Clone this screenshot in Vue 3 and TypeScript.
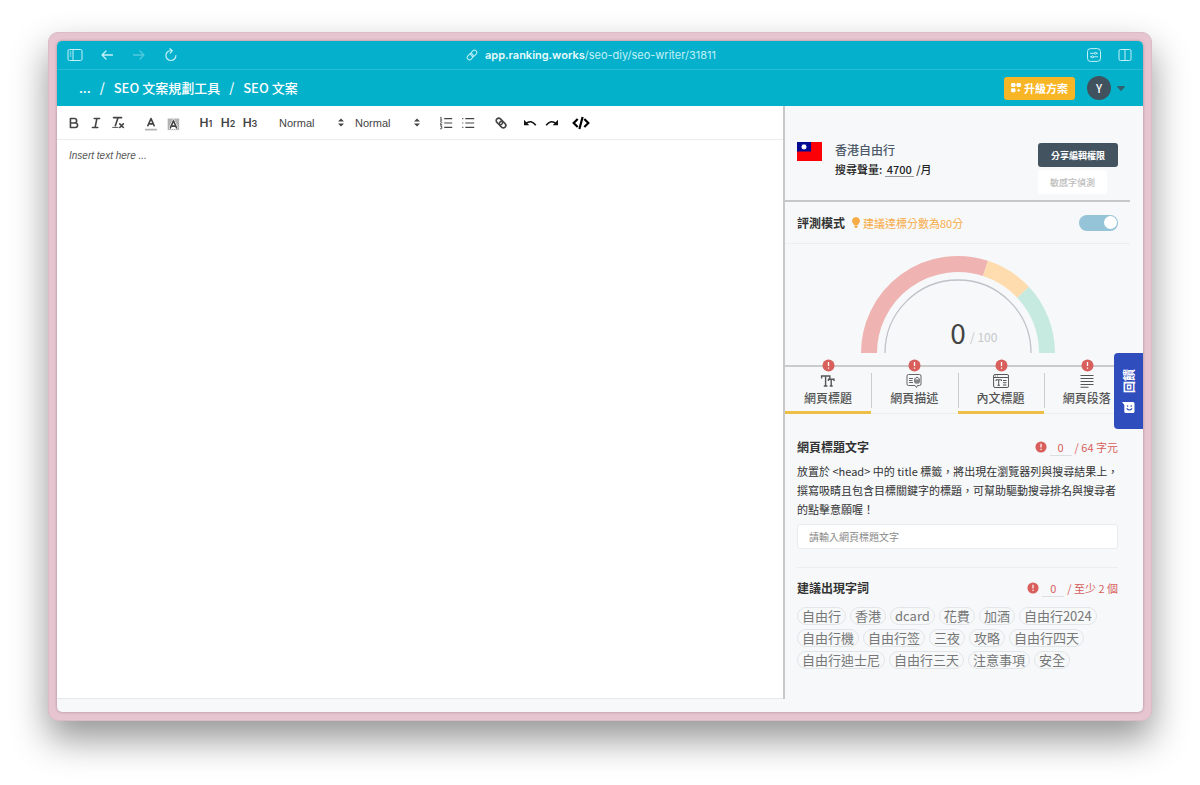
<script setup lang="ts">
import { ref } from 'vue'

interface Tab {
  id: string
  label: string
  complete: boolean
}

const tabs: Tab[] = [
  { id: 'title', label: '網頁標題', complete: true },
  { id: 'description', label: '網頁描述', complete: false },
  { id: 'heading', label: '內文標題', complete: true },
  { id: 'paragraph', label: '網頁段落', complete: false },
]

const keywords: string[] = [
  '自由行', '香港', 'dcard', '花費', '加酒', '自由行2024',
  '自由行機', '自由行签', '三夜', '攻略', '自由行四天',
  '自由行迪士尼', '自由行三天', '注意事項', '安全',
]

const headings = [1, 2, 3]
const evaluating = ref(true)
const pageTitle = ref('')
const content = ref('')
const fontSize = ref('normal')
const fontStyle = ref('normal')
</script>

<template>
  <div class="desktop">
    <div class="frame">
      <div class="window">
        <div class="browser-bar">
          <div class="browser-group">
            <button class="bar-btn" aria-label="Sidebar">
              <svg width="16" height="14" viewBox="0 0 16 14" fill="none" stroke="currentColor">
                <rect x="1" y="1.500" width="14" height="11" rx="1.500" />
                <path d="M6 1.500v11M2.800 4h1.500M2.800 6h1.500M2.800 8h1.500" />
              </svg>
            </button>
            <button class="bar-btn" aria-label="Back">
              <svg width="16" height="14" viewBox="0 0 16 14" fill="none" stroke="currentColor" stroke-width="1.300" stroke-linecap="round" stroke-linejoin="round">
                <path d="M13.500 7H3M7 3L3 7l4 4" />
              </svg>
            </button>
            <button class="bar-btn faded" aria-label="Forward">
              <svg width="16" height="14" viewBox="0 0 16 14" fill="none" stroke="currentColor" stroke-width="1.300" stroke-linecap="round" stroke-linejoin="round">
                <path d="M2.500 7H13M9 3l4 4-4 4" />
              </svg>
            </button>
            <button class="bar-btn" aria-label="Reload">
              <svg width="16" height="14" viewBox="0 0 16 14" fill="none" stroke="currentColor" stroke-width="1.200" stroke-linecap="round" stroke-linejoin="round">
                <path d="M12.900 7.500a5 5 0 1 1-5-5h1.300M7 .7l2.300 1.900L7.300 5" />
              </svg>
            </button>
          </div>
          <div class="address">
            <svg width="12" height="12" viewBox="0 0 12 12" fill="none" stroke="currentColor">
              <g transform="rotate(-45 6 6)">
                <rect x=".2" y="3.700" width="6.600" height="4.600" rx="2.300" />
                <rect x="5.200" y="3.700" width="6.600" height="4.600" rx="2.300" />
              </g>
            </svg>
            <span class="url"><b>app.ranking.works</b>/seo-diy/seo-writer/31811</span>
          </div>
          <div class="browser-group right">
            <button class="bar-btn" aria-label="Page settings">
              <svg width="16" height="14" viewBox="0 0 16 14" fill="none" stroke="currentColor">
                <rect x="1.500" y=".6" width="13" height="12.800" rx="3" />
                <path d="M4.500 5.300h4M10.500 5.300h1M4.500 8.800h1M7.500 8.800h4" stroke-linecap="round" />
                <circle cx="9.500" cy="5.300" r="1" />
                <circle cx="6.500" cy="8.800" r="1" />
              </svg>
            </button>
            <button class="bar-btn" aria-label="Split view">
              <svg width="16" height="14" viewBox="0 0 16 14" fill="none" stroke="currentColor">
                <rect x="2" y="1.500" width="12" height="11" rx="1.500" />
                <path d="M8 1.500v11" />
              </svg>
            </button>
          </div>
        </div>

        <header class="app-header">
          <nav class="crumbs" aria-label="Breadcrumb">
            <a href="#">...</a>
            <span>/</span>
            <a href="#">SEO 文案規劃工具</a>
            <span>/</span>
            <a href="#">SEO 文案</a>
          </nav>
          <div class="account">
            <button class="upgrade">
              <svg width="11" height="10" viewBox="0 0 11 10" fill="currentColor">
                <rect x="0" y="0" width="4.500" height="4" rx="1.200" />
                <rect x="5.500" y="0" width="4.500" height="4" rx="1.200" />
                <rect x="0" y="5.200" width="4.500" height="4" rx="1.200" />
                <path d="M7.700 5.300l.6 1.400 1.400.6-1.400.6-.6 1.400-.6-1.400-1.400-.6 1.400-.6z" />
              </svg>
              升級方案
            </button>
            <button class="profile" aria-label="Account menu">
              <span class="avatar">Y</span>
              <svg width="8" height="5" viewBox="0 0 8 5"><path d="M.5 0h7q.6.3.2.9L4.700 4.600q-.7.7-1.400 0L.3.9Q-.1.300.5 0z" fill="#33606f" /></svg>
            </button>
          </div>
        </header>

        <main class="workspace">
          <section class="editor">
            <div class="toolbar" role="toolbar" aria-label="Formatting">
              <div class="tools">
                <button aria-label="Bold">
                  <svg class="q" viewBox="0 0 18 18"><path d="M5 4h4.500a2.500 2.500 0 0 1 0 5H5zM5 9h5.500a2.500 2.500 0 0 1 0 5H5z" /></svg>
                </button>
                <button aria-label="Italic">
                  <svg class="q" viewBox="0 0 18 18"><path d="M7 4h6M5 14h6M8 14l2-10" /></svg>
                </button>
                <button aria-label="Clear formatting">
                  <svg class="q" viewBox="0 0 18 18"><path d="M4 3h9M6 12l3-9M11 10l4 4M15 10l-4 4" /><path class="thin" d="M3 14h6" /></svg>
                </button>
              </div>
              <div class="tools">
                <button aria-label="Text color">
                  <svg class="q" viewBox="0 0 18 18"><path d="M5.500 12L9 4l3.500 8M6.400 10h5.200" /><path d="M3 16.500h12" opacity=".4" /></svg>
                </button>
                <button aria-label="Background color">
                  <svg class="q" viewBox="0 0 18 18">
                    <defs>
                      <pattern id="dots" width="2" height="2" patternUnits="userSpaceOnUse"><path d="M0 0h1v1H0zM1 1h1v1H1z" fill="#666" stroke="none" /></pattern>
                    </defs>
                    <rect x="3" y="4" width="13" height="13" fill="url(#dots)" stroke="none" />
                    <path d="M6 14.500L9.500 6.500l3.500 8z" fill="#fff" stroke="#fff" stroke-width="3" />
                    <path d="M6 14.500L9.500 6.500l3.500 8M6.900 12.500h5.200" />
                  </svg>
                </button>
              </div>
              <div class="tools">
                <button v-for="n in headings" :key="n" class="heading-btn" :aria-label="`Heading ${n}`">H<small>{{ n }}</small></button>
              </div>
              <div class="tools">
                <label class="picker">
                  <select v-model="fontSize" aria-label="Size"><option value="normal">Normal</option></select>
                  <svg width="6" height="9" viewBox="0 0 6 9" fill="#444"><path d="M0 3.500L3 .5l3 3zM0 5.500l3 3 3-3z" /></svg>
                </label>
                <label class="picker">
                  <select v-model="fontStyle" aria-label="Paragraph style"><option value="normal">Normal</option></select>
                  <svg width="6" height="9" viewBox="0 0 6 9" fill="#444"><path d="M0 3.500L3 .5l3 3zM0 5.500l3 3 3-3z" /></svg>
                </label>
              </div>
              <div class="tools">
                <button aria-label="Numbered list">
                  <svg class="q list" viewBox="0 0 18 18"><path d="M7 4h9M7 9h9M7 14h9" /><path class="thin" d="M2.500 3.200l1-.7v3.300M2.300 5.800h2.400M2.300 7.800q2-.8 2 .5 0 .5-2 2.200h2.400M2.300 12.300h2.200l-1 1.300q1.200 0 1.200 1t-2.400 1" /></svg>
                </button>
                <button aria-label="Bulleted list">
                  <svg class="q list" viewBox="0 0 18 18"><path d="M6 4h10M6 9h10M6 14h10M2.500 4h1.200M2.500 9h1.200M2.500 14h1.200" /></svg>
                </button>
              </div>
              <div class="tools">
                <button aria-label="Link">
                  <svg class="q" viewBox="0 0 18 18">
                    <g transform="rotate(45 9 9)">
                      <rect x="2.500" y="6.200" width="8" height="5.600" rx="2.800" />
                      <rect x="7.500" y="6.200" width="8" height="5.600" rx="2.800" />
                    </g>
                  </svg>
                </button>
              </div>
              <div class="tools close">
                <button aria-label="Undo">
                  <svg width="14" height="14" viewBox="0 0 14 14"><path d="M3 7.500q5-4.300 9.800 1.800" fill="none" stroke="#111" stroke-width="1.600" /><path d="M1 3.800v5.400h5.300z" fill="#111" /></svg>
                </button>
                <button aria-label="Redo">
                  <svg width="14" height="14" viewBox="0 0 14 14"><path d="M11 7.500Q6 3.200 1.200 9.300" fill="none" stroke="#111" stroke-width="1.600" /><path d="M13 3.800v5.400H7.700z" fill="#111" /></svg>
                </button>
              </div>
              <div class="tools close">
                <button aria-label="Source code">
                  <svg width="18" height="14" viewBox="0 0 18 14" fill="none" stroke="#000" stroke-width="2.200"><path d="M5.700 3L1.700 7l4 4M12.300 3l4 4-4 4M10.600 1L7.400 13" /></svg>
                </button>
              </div>
            </div>
            <textarea v-model="content" class="page" aria-label="Article content" placeholder="Insert text here ..."></textarea>
          </section>

          <aside class="side">
            <div class="side-body">
              <div class="project">
                <svg class="flag" width="25" height="19" viewBox="0 0 25 19">
                  <path d="M0 0h25v19H0z" fill="#fb0007" />
                  <path d="M0 0h14v9.500H0z" fill="#000b92" />
                  <path d="M7 1.700l.8 1.400 1.500-.5-.5 1.500 1.400.8-1.400.8.5 1.500-1.500-.5L7 8.100l-.8-1.400-1.500.5.5-1.500-1.400-.8 1.400-.8-.5-1.500 1.500.5z" fill="#fff" />
                </svg>
                <div class="project-text">
                  <h1>香港自由行</h1>
                  <p>搜尋聲量: <span class="volume">4700</span> /月</p>
                </div>
                <div class="project-actions">
                  <button class="share">分享編輯權限</button>
                  <button class="detect" disabled>敏感字偵測</button>
                </div>
              </div>

              <div class="mode">
                <label for="mode-switch">評測模式</label>
                <span class="hint">
                  <svg width="8" height="11" viewBox="0 0 8 11" fill="currentColor"><path d="M4 0a3.900 3.900 0 0 1 2.500 6.900L6 8H2l-.5-1.100A3.900 3.900 0 0 1 4 0zM2.300 8.600h3.400v1L4.800 11H3.200l-.9-1.400z" /></svg>
                  建議達標分數為80分
                </span>
                <input id="mode-switch" v-model="evaluating" class="switch" type="checkbox" role="switch">
              </div>

              <div class="gauge">
                <svg width="200" height="98" viewBox="0 0 200 98" fill="none" role="img" aria-label="0 / 100">
                  <path d="M11 98A89 89 0 0 1 127.500 13.400" stroke="#efb3b1" stroke-width="16" />
                  <path d="M127.500 13.400A89 89 0 0 1 165.100 37.300" stroke="#fedcae" stroke-width="16" />
                  <path d="M165.100 37.300A89 89 0 0 1 189 98" stroke="#c6eadf" stroke-width="16" />
                  <path d="M27 98a73 73 0 0 1 146 0" stroke="#bfc2c7" stroke-width="1.300" />
                  <text class="score" x="100" y="89" text-anchor="middle">0</text>
                  <text class="total" x="112" y="87">/ 100</text>
                </svg>
              </div>

              <div class="tabs" role="tablist">
                <button v-for="tab in tabs" :key="tab.id" class="tab" :class="{ complete: tab.complete }" role="tab">
                  <svg class="alert badge" width="13" height="13" viewBox="0 0 13 13"><circle cx="6.500" cy="6.500" r="6" fill="#d85f5c" /><path d="M6.500 3v4M6.500 8.500v1.300" stroke="#fff" stroke-width="1.300" /></svg>
                  <svg v-if="tab.id === 'title'" width="16" height="16" viewBox="0 0 16 16" fill="none" stroke="currentColor" stroke-width="1.400">
                    <path d="M1.600 5.500V3h8.200v2.500M5.600 3v10M3.800 13h3.600M8.500 8V6.300H14V8M11.200 6.300V13M9.700 13h3" />
                  </svg>
                  <svg v-else-if="tab.id === 'description'" width="16" height="16" viewBox="0 0 16 16" fill="none" stroke="currentColor">
                    <path d="M2.500 1.500h11q1.500 0 1.500 1.500v8q0 1.500-1.500 1.500h-2l-1 2-1.500-2H2.500Q1 12.500 1 11V3q0-1.500 1.500-1.500zM3 5.500h4M3 7.500h3.500M3 9.500h4M8 6.500l3-2.500 3 2.500M9 6v4h4V6M8 8h6M11 6v4" stroke-width=".9" />
                  </svg>
                  <svg v-else-if="tab.id === 'heading'" width="16" height="16" viewBox="0 0 16 16" fill="none" stroke="currentColor">
                    <rect x=".6" y="1.500" width="15" height="13" rx="1.500" />
                    <path d="M.6 4.500h15M3 8V6.800h5.500V8M5.700 6.800v5.500M4.500 12.300h2.500M10 7.500h3.500M10 9.700h3.500M10 12h3.500M2.300 3h.8M4.300 3h.8" />
                  </svg>
                  <svg v-else width="16" height="16" viewBox="0 0 16 16" fill="none" stroke="currentColor" stroke-width="1.100">
                    <path d="M1.500 2.500h13M1.500 5.500h13M1.500 8.500h13M1.500 11.500h13M1.500 14.300h8" />
                  </svg>
                  <span>{{ tab.label }}</span>
                </button>
              </div>

              <section class="block">
                <div class="block-head">
                  <h2><label for="page-title">網頁標題文字</label></h2>
                  <p class="count">
                    <svg class="alert" width="12" height="12" viewBox="0 0 13 13"><circle cx="6.500" cy="6.500" r="6" fill="#d85f5c" /><path d="M6.500 3v4M6.500 8.500v1.300" stroke="#fff" stroke-width="1.300" /></svg>
                    <span class="number">0</span>
                    <span>/ 64 字元</span>
                  </p>
                </div>
                <p class="help">放置於 &lt;head&gt; 中的 title 標籤，將出現在瀏覽器列與搜尋結果上，撰寫吸睛且包含目標關鍵字的標題，可幫助驅動搜尋排名與搜尋者的點擊意願喔！</p>
                <input id="page-title" v-model="pageTitle" class="title-input" type="text" placeholder="請輸入網頁標題文字">
              </section>

              <section class="block words">
                <div class="block-head">
                  <h2>建議出現字詞</h2>
                  <p class="count">
                    <svg class="alert" width="12" height="12" viewBox="0 0 13 13"><circle cx="6.500" cy="6.500" r="6" fill="#d85f5c" /><path d="M6.500 3v4M6.500 8.500v1.300" stroke="#fff" stroke-width="1.300" /></svg>
                    <span class="number">0</span>
                    <span>/ 至少 2 個</span>
                  </p>
                </div>
                <ul class="tags">
                  <li v-for="word in keywords" :key="word">{{ word }}</li>
                </ul>
              </section>
            </div>
          </aside>
        </main>

        <button class="feedback">
          <svg width="13" height="13" viewBox="0 0 13 13"><path d="M0 1h11q1.500 0 1.500 1.500v8q0 1.500-1.500 1.500H3.800q-1.500 0-1.500-1.500V4z" fill="#fff" /><path d="M4.700 7.300q2.700 3.400 5.400 0" fill="none" stroke="#2f4dbd" stroke-width="1.100" /><circle cx="5.600" cy="5" r=".8" fill="#2f4dbd" /><circle cx="9.200" cy="5" r=".8" fill="#2f4dbd" /></svg>
          <span>回饋</span>
        </button>
      </div>
    </div>
  </div>
</template>

<style>
body {
  margin: 0;
  background: #fff;
}
</style>

<style scoped>
* {
  box-sizing: border-box;
}

.desktop {
  display: flex;
  min-height: 100vh;
  padding: 32px 48px 64px;
  font-family: "Noto Sans CJK TC", "Noto Sans", sans-serif;
  font-size: 12px;
  color: #333;
}

button,
input,
select,
textarea {
  margin: 0;
  padding: 0;
  border: 0;
  background: none;
  color: inherit;
  font: inherit;
}

svg {
  display: block;
  flex: none;
}

h1,
h2,
p,
ul {
  margin: 0;
  padding: 0;
}

a {
  color: inherit;
  text-decoration: none;
}

.frame {
  display: flex;
  flex: 1;
  min-width: 0;
  padding: 8px;
  border: 1px solid #d9bcc6;
  border-radius: 10px;
  background: #e6c5d0;
  box-shadow: 0 18px 36px rgba(0, 0, 0, 0.42);
}

.window {
  position: relative;
  display: flex;
  flex: 1;
  flex-direction: column;
  min-width: 0;
  overflow: hidden;
  padding-bottom: 13px;
  border-radius: 5px;
  background: #f6f8fa;
  box-shadow: 0 0 3px rgba(80, 40, 60, 0.4);
}

.browser-bar {
  display: flex;
  align-items: center;
  height: 29px;
  padding: 0 10px;
  border-bottom: 1px solid #26bcd3;
  background: #05b0cc;
  color: #c3f1f8;
}

.browser-group {
  display: flex;
  flex: 1;
  gap: 16px;
}

.browser-group.right {
  justify-content: flex-end;
  gap: 15px;
}

.faded {
  opacity: 0.4;
}

.address {
  display: flex;
  align-items: center;
  gap: 7px;
  margin-right: 18px;
  font: 11px/16px Inter, sans-serif;
}

.address b {
  font-weight: 600;
  color: #e6fbfd;
}

.app-header {
  display: flex;
  align-items: center;
  justify-content: space-between;
  height: 36px;
  padding: 0 18px 0 22px;
  background: #03b1cb;
  color: #fff;
}

.crumbs {
  display: flex;
  gap: 9px;
  padding-bottom: 2px;
  font-size: 13px;
  font-weight: 500;
}

.account,
.profile {
  display: flex;
  align-items: center;
}

.account {
  gap: 12px;
}

.profile {
  gap: 6px;
}

.upgrade {
  display: flex;
  align-items: center;
  justify-content: center;
  gap: 2px;
  height: 23px;
  padding: 0 7px;
  border-radius: 3px;
  background: #f8b526;
  font-size: 11px;
  font-weight: 700;
}

.avatar {
  width: 24px;
  border-radius: 50%;
  background: #41525f;
  color: #fff;
  font-size: 11px;
  font-weight: 500;
  line-height: 24px;
  text-align: center;
}

.workspace {
  display: flex;
  flex: 1;
  min-height: 0;
}

.editor {
  display: flex;
  flex: 1;
  flex-direction: column;
  min-width: 0;
  border-bottom: 1px solid #e6e8e9;
  background: #fff;
}

.toolbar {
  display: flex;
  align-items: center;
  height: 34px;
  padding: 0 6px;
  border-bottom: 1px solid #ececec;
  color: #444;
}

.tools {
  display: flex;
  align-items: center;
  margin-right: 11px;
}

.tools.close {
  margin-left: -4px;
}

.tools button {
  display: flex;
  align-items: center;
  justify-content: center;
  min-width: 22px;
  height: 22px;
}

.q {
  width: 16px;
  height: 16px;
  fill: none;
  stroke: #444;
  stroke-width: 1.8;
  stroke-linecap: round;
  stroke-linejoin: round;
}

.q.list {
  stroke-width: 1.3;
  stroke-linecap: butt;
}

.q .thin {
  stroke-width: 1;
}

.tools .heading-btn {
  align-items: baseline;
  font: 600 12px/22px Inter, sans-serif;
}

.heading-btn small {
  font-size: 9px;
}

.picker {
  display: flex;
  align-items: center;
  width: 76px;
  padding: 0 4px 0 7px;
}

.picker select {
  flex: 1;
  min-width: 0;
  height: 22px;
  appearance: none;
  font: 500 11px/22px "Liberation Sans", Arial, sans-serif;
}

.page {
  flex: 1;
  padding: 8px 12px;
  outline: none;
  resize: none;
  font: 10px/16px "Liberation Sans", Arial, sans-serif;
}

.page::placeholder {
  color: #555;
  font-style: italic;
  opacity: 1;
}

.side {
  flex: 0 0 360px;
  min-width: 0;
  border-left: 2px solid #c8c8c8;
  background: #f6f8fa;
}

.side-body {
  margin-right: 13px;
}

.project {
  display: flex;
  padding: 34px 12px 6px;
  border-bottom: 2px solid #c8c8c8;
}

.flag {
  margin-top: 2px;
}

.project-text {
  flex: 1;
  padding-left: 13px;
}

.project h1 {
  color: #4e5a68;
  font-size: 12px;
  font-weight: 500;
  line-height: 20px;
}

.project p {
  color: #222;
  font-size: 11px;
  font-weight: 500;
  line-height: 19px;
}

.volume {
  display: inline-block;
  padding: 0 2px;
  border-bottom: 1px solid #999;
  line-height: 14px;
}

.project-actions {
  display: flex;
  flex-direction: column;
  align-items: flex-start;
  gap: 3px;
  padding-top: 3px;
}

.project-actions button {
  height: 24px;
  padding: 0 12px;
  border-radius: 3px;
  font-size: 9px;
  font-weight: 500;
}

.project-actions .share {
  padding: 0 13px;
  background: #43535f;
  color: #fff;
  font-weight: 700;
}

.detect {
  background: #fff;
  color: #bcbcbc;
}

.mode {
  display: flex;
  align-items: center;
  height: 42px;
  padding: 0 12px;
  border-bottom: 1px solid #eceef0;
}

.mode label {
  color: #333;
  font-size: 12px;
  font-weight: 700;
}

.hint {
  display: flex;
  flex: 1;
  align-items: center;
  gap: 3px;
  padding-left: 7px;
  color: #f7ac48;
  font-size: 11px;
}

.switch {
  display: flex;
  align-items: center;
  width: 39px;
  height: 16px;
  padding: 0 1px;
  appearance: none;
  border-radius: 8px;
  background: #c9ced2;
}

.switch::before {
  content: "";
  width: 13px;
  height: 13px;
  border-radius: 50%;
  background: #fff;
}

.switch:checked {
  justify-content: flex-end;
  background: #95c3d7;
}

.gauge {
  display: flex;
  justify-content: center;
  padding: 11px 0 12px;
}

.score {
  fill: #444;
  font-size: 28px;
}

.total {
  fill: #c6c8ca;
  font-size: 12px;
}

.tabs {
  display: grid;
  grid-template-columns: repeat(4, 1fr);
  border-top: 2px solid #cbcbcb;
}

.tab {
  position: relative;
  display: flex;
  flex-direction: column;
  align-items: center;
  height: 47px;
  padding-top: 6px;
  border-bottom: 1px solid #eceef0;
  color: #555;
  font-size: 12px;
  font-weight: 500;
  line-height: 18px;
}

.tab.complete {
  border-bottom: 3px solid #edbf48;
}

.tab + .tab::before {
  content: "";
  position: absolute;
  top: 6px;
  left: 0;
  height: 35px;
  border-left: 1px solid #ccc;
}

.badge {
  position: absolute;
  top: -8px;
  left: calc(50% - 6px);
}

.block {
  margin: 0 12px;
  padding: 23px 0 18px;
}

.block.words {
  padding-top: 10px;
  border-top: 1px solid #eceef0;
}

.block-head {
  display: flex;
  align-items: center;
  justify-content: space-between;
}

.block h2 {
  color: #333;
  font-size: 12px;
  font-weight: 700;
  line-height: 20px;
}

.count {
  display: flex;
  align-items: center;
  gap: 3px;
  color: #d85f5c;
  font-size: 11px;
  line-height: 16px;
}

.number {
  width: 22px;
  border-bottom: 1px solid #dcdfe2;
  text-align: center;
}

.help {
  margin: 5px -6px 5px 0;
  color: #333;
  font-size: 11px;
  line-height: 19px;
}

.title-input {
  display: block;
  width: 100%;
  height: 25px;
  padding: 0 11px;
  border: 1px solid #e9ebed;
  border-radius: 3px;
  background: #fff;
  font-size: 10px;
}

.title-input::placeholder {
  color: #888;
  opacity: 1;
}

.tags {
  display: flex;
  flex-wrap: wrap;
  gap: 4px;
  margin-top: 9px;
  list-style: none;
}

.tags li {
  padding: 0 4px;
  border: 1px solid #e3e6e8;
  border-radius: 9px;
  color: #777;
  font-size: 13px;
  line-height: 16px;
}

.feedback {
  position: absolute;
  top: 312px;
  right: 0;
  display: flex;
  align-items: center;
  gap: 8px;
  height: 76px;
  padding: 15px 8px;
  border-radius: 0 4px 4px 0;
  background: #2f4dbd;
  color: #fff;
  font-size: 12px;
  font-weight: 700;
  line-height: 13px;
  writing-mode: vertical-rl;
  text-orientation: sideways;
  transform: rotate(180deg);
}

.feedback svg {
  transform: rotate(180deg);
}
</style>
